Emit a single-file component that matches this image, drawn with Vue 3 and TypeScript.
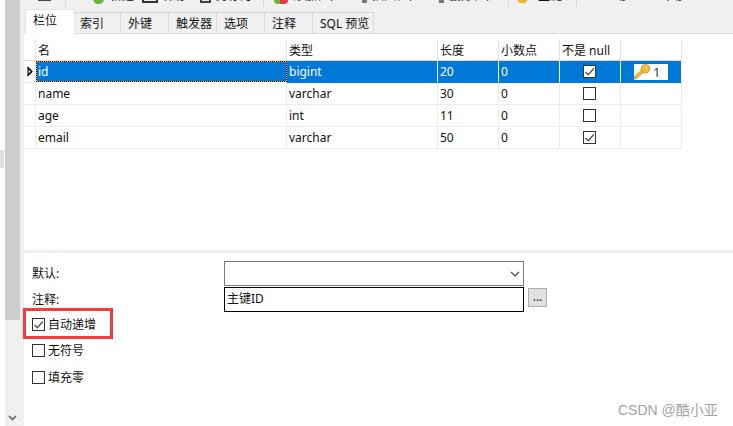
<script setup lang="ts">
interface Tool { kind: string; label: string; ml: number }
const tools: Tool[] = [
  { kind: 'doc', label: '', ml: 14 },
  { kind: 'sep', label: '', ml: 14 },
  { kind: 'green', label: '新建', ml: 27 },
  { kind: 'box', label: '保存', ml: 8 },
  { kind: 'box2', label: '另存为', ml: 10 },
  { kind: 'sep', label: '', ml: 11 },
  { kind: 'add', label: '添加栏位', ml: 10 },
  { kind: 'grey', label: '插入栏位', ml: 21 },
  { kind: 'grey', label: '删除栏位', ml: 19 },
  { kind: 'sep', label: '', ml: 11 },
  { kind: 'key', label: '主键', ml: 9 },
  { kind: 'sep', label: '', ml: 14 },
  { kind: 'none', label: '上移', ml: 24 },
  { kind: 'none', label: '下移', ml: 27 }
]
const tabs = ['栏位', '索引', '外键', '触发器', '选项', '注释', 'SQL 预览']
const headers = ['名', '类型', '长度', '小数点', '不是 null']
const rows = [
  { name: 'id', type: 'bigint', len: '20', dec: '0', notNull: true, key: true },
  { name: 'name', type: 'varchar', len: '30', dec: '0', notNull: false, key: false },
  { name: 'age', type: 'int', len: '11', dec: '0', notNull: false, key: false },
  { name: 'email', type: 'varchar', len: '50', dec: '0', notNull: true, key: false }
]
const options = [
  { label: '自动递增', checked: true },
  { label: '无符号', checked: false },
  { label: '填充零', checked: false }
]
</script>

<template>
  <div class="app">
    <div class="gutter"><div class="patch"></div></div>
    <div class="scroll">
      <div class="thumb"></div>
      <svg class="chev" width="9" height="6" viewBox="0 0 9 6"><path d="M1 1l3.5 3.5L8 1" fill="none" stroke="#666" stroke-width="1.6" /></svg>
    </div>
    <div class="main">
      <div class="toolbar">
        <div v-for="(t, i) in tools" :key="i" class="tool" :style="{ marginLeft: t.ml + 'px' }">
          <span :class="['ic', 'ic-' + t.kind]"></span>
          <span v-if="t.label" class="tool-label">{{ t.label }}</span>
        </div>
      </div>
      <div class="tabs">
        <div v-for="(t, i) in tabs" :key="t" :class="['tab', { active: i === 0, wide: i === 6 }]">{{ t }}</div>
      </div>
      <div class="grid-area">
        <div class="row head">
          <div class="cell ind"></div>
          <div v-for="h in headers" :key="h" class="cell">{{ h }}</div>
          <div class="cell"></div>
        </div>
        <div v-for="(r, i) in rows" :key="r.name" :class="['row', { sel: i === 0 }]">
          <div class="cell ind">
            <svg v-if="i === 0" width="8" height="11" viewBox="0 0 8 11"><path d="M1.5 1l4.5 4.5L1.5 10" fill="#000" stroke="#000" stroke-width="1.2" /><path d="M2.6 3.4l2 2.1-2 2.1z" fill="#fff" /></svg>
          </div>
          <div :class="['cell', { focus: i === 0 }]">{{ r.name }}</div>
          <div class="cell">{{ r.type }}</div>
          <div class="cell">{{ r.len }}</div>
          <div class="cell">{{ r.dec }}</div>
          <div class="cell checkcell">
            <span class="check">
              <svg v-if="r.notNull" width="11" height="11" viewBox="0 0 11 11"><path d="M1.5 6l2.8 2.8L9.8 2.5" fill="none" stroke="#555" stroke-width="1.4" /></svg>
            </span>
          </div>
          <div class="cell keycell">
            <span v-if="r.key" class="keybox">
              <svg width="18" height="16" viewBox="0 0 18 16">
                <path d="M1.5 13.5L8 7.5" stroke="#c98d1c" stroke-width="3.6" stroke-linecap="round" />
                <path d="M1.5 13.5L8 7.5" stroke="#f6bf45" stroke-width="2" stroke-linecap="round" />
                <circle cx="11.5" cy="4.8" r="4.3" fill="#f4b93e" stroke="#cf9425" />
                <circle cx="12.5" cy="3.8" r="1" fill="#fbe3a5" />
              </svg>
              <span class="keynum">1</span>
            </span>
          </div>
        </div>
      </div>
      <div class="divider"></div>
      <div class="form">
        <div class="frow">
          <label class="flabel">默认:</label>
          <div class="combo">
            <svg width="10" height="6" viewBox="0 0 10 6"><path d="M1 1l4 4 4-4" fill="none" stroke="#444" stroke-width="1.1" /></svg>
          </div>
        </div>
        <div class="frow second">
          <label class="flabel">注释:</label>
          <div class="input">主键ID</div>
          <button class="more">...</button>
        </div>
        <div class="opts">
          <div v-for="o in options" :key="o.label" class="opt">
            <span class="check">
              <svg v-if="o.checked" width="11" height="11" viewBox="0 0 11 11"><path d="M1.5 6l2.8 2.8L9.8 2.5" fill="none" stroke="#555" stroke-width="1.4" /></svg>
            </span>
            <span>{{ o.label }}</span>
          </div>
        </div>
      </div>
    </div>
    <div class="redbox"></div>
    <div class="watermark">CSDN @酷小亚</div>
  </div>
</template>

<style scoped>
.app {
  position: relative;
  display: flex;
  width: 733px;
  height: 426px;
  overflow: hidden;
  background: #fff;
  color: #111;
  font: 12px/16px "Noto Sans", "Noto Sans CJK SC", sans-serif;
}
.gutter { width: 5px; flex: none; padding-top: 150px; box-sizing: border-box; }
.patch { width: 4px; height: 18px; background: #e0e0e0; }
.scroll {
  width: 19px;
  flex: none;
  background: #f0f0f0;
  position: relative;
}
.thumb { width: 15px; height: 320px; background: #cdcdcd; }
.chev { position: absolute; left: 3px; bottom: 5px; }
.main { flex: 1; display: flex; flex-direction: column; min-width: 0; }
.toolbar {
  height: 9px;
  flex: none;
  display: flex;
  align-items: flex-start;
  background: #f0f0f0;
  overflow: hidden;
}
.tool { display: flex; align-items: flex-start; flex: none; }
.tool-label { margin-top: -12px; margin-left: 5px; font-size: 12px; line-height: 16px; white-space: nowrap; }
.ic { display: block; flex: none; box-sizing: border-box; }
.ic-doc { width: 13px; height: 1px; background: #444; }
.ic-sep { width: 1px; height: 7px; background: #d9d9d9; }
.ic-green { width: 11px; height: 11px; border-radius: 50%; background: #6ab43a; margin-top: -7px; margin-right: 1px; }
.ic-box { width: 16px; height: 3px; border: 2px solid #333; border-top: 0; }
.ic-box2 { width: 11px; height: 3px; border: 2px solid #444; border-top: 0; margin-left: 3px; }
.ic-add { width: 14px; height: 4px; border-radius: 0 0 4px 4px; background: linear-gradient(90deg, #6ab43a 40%, #e8384a 40%); }
.ic-grey { width: 5px; height: 3px; background: #777; }
.ic-key { width: 9px; height: 3px; border-radius: 0 0 5px 5px; background: #f0b030; margin-right: 6px; }
.ic-none { width: 0; }
.tabs {
  height: 25px;
  flex: none;
  display: flex;
  align-items: flex-end;
  box-sizing: border-box;
  background: #f0f0f0;
  border-bottom: 1px solid #d9d9d9;
  padding-left: 1px;
}
.tab {
  width: 48px;
  height: 22px;
  box-sizing: border-box;
  padding: 3px 0 0 7px;
  border-right: 1px solid #d9d9d9;
  border-top: 1px solid #d9d9d9;
  flex: none;
  white-space: nowrap;
  margin-bottom: -1px;
  border-bottom: 1px solid #d9d9d9;
}
.tab.wide { width: 61px; }
.tab.active {
  width: 50px;
  height: 25px;
  padding: 3px 0 0 7px;
  background: #fff;
  border-left: 1px solid #e4e4e4;
  border-top: 1px solid #e4e4e4;
  border-right: 1px solid #e4e4e4;
  border-bottom: 0;
  position: relative;
}
.tab:nth-child(2) { width: 46px; padding-left: 5px; }
.grid-area { flex: none; height: 216px; padding-top: 5px; box-sizing: border-box; }
.row {
  display: grid;
  grid-template-columns: 12px 251px 151px 61px 61px 61px 61px;
  width: 658px;
  height: 22px;
}
.cell {
  box-sizing: border-box;
  height: 22px;
  border-right: 1px solid #ececec;
  border-bottom: 1px solid #ececec;
  padding: 3px 0 0 2px;
  white-space: nowrap;
  overflow: hidden;
}
.head .cell { border-bottom-color: #dcdcdc; border-right-color: #e4e4e4; padding-top: 4px; }
.ind { padding: 0; display: flex; align-items: center; justify-content: center; }
.sel .cell { background: #0078d7; color: #fff; border-right-color: #fff; border-bottom-color: #0078d7; }
.sel .ind { background: #fff; border-right-color: #ececec; border-bottom-color: #ececec; }
.sel .focus {
  border: 1px dotted #000;
  padding: 2px 0 0 1px;
  height: 21px;
  background: linear-gradient(#0078d7, #0078d7) padding-box, #f0b060 border-box;
}
.sel .keycell { background: #0078d7; }
.checkcell { padding: 4px 0 0 23px; }
.check {
  width: 13px;
  height: 13px;
  box-sizing: border-box;
  border: 1px solid #333;
  background: #fff;
  display: flex;
  align-items: center;
  justify-content: center;
  flex: none;
}
.keycell { padding: 3px 0 0 13px; }
.keybox {
  display: flex;
  align-items: center;
  width: 34px;
  height: 16px;
  background: #fff;
  color: #1f3f66;
}
.keynum { margin-left: 1px; font-size: 13px; }
.divider { height: 3px; flex: none; background: #f0f0f0; }
.form { padding: 8px 0 0 8px; }
.frow { display: flex; align-items: center; height: 25px; }
.frow.second { margin-top: 1px; }
.flabel { width: 192px; flex: none; }
.combo {
  width: 300px;
  height: 25px;
  box-sizing: border-box;
  border: 1px solid #7a7a7a;
  display: flex;
  align-items: center;
  justify-content: flex-end;
  padding-right: 3px;
}
.input {
  width: 300px;
  height: 25px;
  box-sizing: border-box;
  border: 1px solid #000;
  padding: 3px 0 0 2px;
}
.more {
  width: 19px;
  height: 19px;
  margin: 0 0 4px 4px;
  padding: 0 0 1px;
  box-sizing: border-box;
  border: 1px solid #adadad;
  background: #e1e1e1;
  color: #111;
  font: inherit;
  line-height: 12px;
}
.opts { padding-top: 6px; display: flex; flex-direction: column; gap: 13px; }
.opt { display: flex; align-items: center; gap: 3px; height: 13px; }
.opt:last-child { margin-top: 1px; }
.redbox {
  position: absolute;
  left: 23px;
  top: 308px;
  width: 90px;
  height: 31px;
  box-sizing: border-box;
  border: 3px solid #f73a3a;
  pointer-events: none;
}
.watermark {
  position: absolute;
  left: 618px;
  top: 402px;
  font: 14px/16px "Liberation Sans", "Noto Sans CJK SC", sans-serif;
  color: #a3a3a3;
  white-space: nowrap;
}
</style>
